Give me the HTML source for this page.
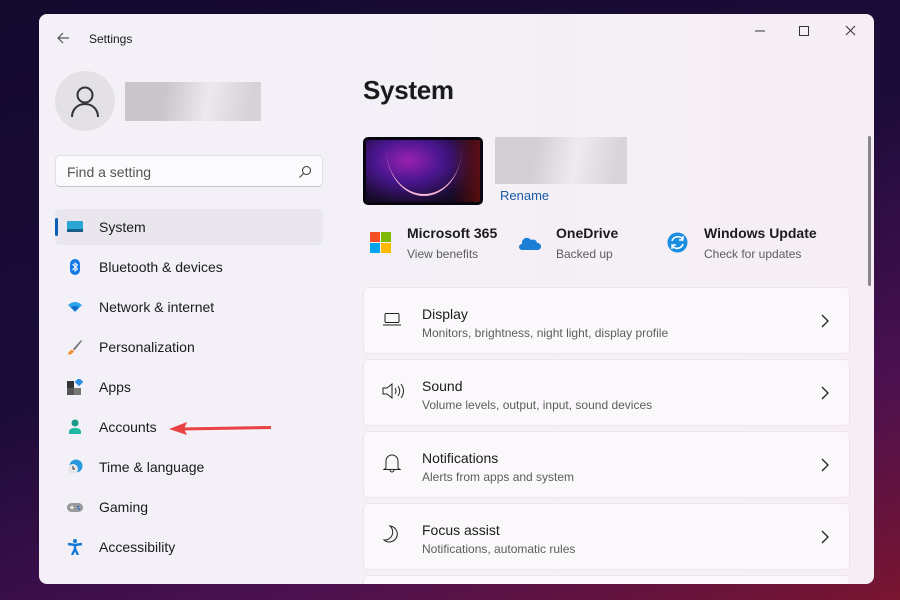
<!DOCTYPE html>
<html><head><meta charset="utf-8"><style>
*{margin:0;padding:0;box-sizing:border-box}
body{width:900px;height:600px;overflow:hidden;position:relative;font-family:"Liberation Sans",sans-serif;color:#1b1b1b;
background:linear-gradient(160deg,#140a2e 0%,#1c0c3a 45%,#4a1050 75%,#7a1530 100%)}
.win{position:absolute;left:39px;top:14px;width:835px;height:570px;border-radius:8px;overflow:hidden;
background:linear-gradient(90deg,#f3f0f7 0%,#f3f0f7 40%,#f7eef5 100%)}
.abs{position:absolute}
.nav{position:absolute;left:16px;width:268px;height:36px;border-radius:5px;font-size:14px;line-height:36px;padding-left:44px}
.nav svg{position:absolute;left:12px;top:10px}
.card{position:absolute;left:324px;width:487px;height:67px;background:#fbf8fb;border:1px solid #ebe5ec;border-radius:5px}
.card .h{position:absolute;left:58px;top:18px;font-size:14px}
.card .s{position:absolute;left:58px;top:38px;font-size:12px;color:#5d5d5d}
.card .ic{position:absolute;left:18px;top:23px}
.card .ch{position:absolute;right:20px;top:26px}
.q .b{position:absolute;font-size:14px;font-weight:bold;top:0}
.q .s{position:absolute;font-size:12px;color:#5d5d5d;top:22px}
</style></head><body>
<div class="win">
 <svg class="abs" style="left:16px;top:16px" width="16" height="16"><path d="M14 8H3M8 3L3 8l5 5" stroke="#555" stroke-width="1.2" fill="none"/></svg>
 <div class="abs" style="left:50px;top:18px;font-size:12px">Settings</div>
 <svg class="abs" style="left:715px;top:10px" width="110" height="14"><path d="M1 7h10" stroke="#333"/><rect x="45.5" y="2.5" width="9" height="9" stroke="#333" fill="none"/><path d="M92 2l9 9M101 2l-9 9" stroke="#333"/></svg>
 <div class="abs" style="left:16px;top:57px;width:60px;height:60px;border-radius:50%;background:#e3e1e5"></div>
 <svg class="abs" style="left:30px;top:70px" width="32" height="34"><circle cx="16" cy="11" r="7.5" stroke="#333" stroke-width="2" fill="none"/><path d="M3 33c0-8 6-13 13-13s13 5 13 13" stroke="#333" stroke-width="2" fill="none"/></svg>
 <div class="abs" style="left:86px;top:68px;width:136px;height:39px;background:linear-gradient(100deg,#cac6cc 30%,#ece9ee 60%,#d6d3d8 90%)"></div>
 <div class="abs" style="left:16px;top:141px;width:268px;height:32px;background:#fbfafc;border:1px solid #e1dee3;border-bottom-color:#c9c6cb;border-radius:5px;font-size:14px;color:#555;padding:8px 0 0 11px">Find a setting
  <svg class="abs" style="right:10px;top:9px" width="14" height="14"><circle cx="8.5" cy="5.5" r="4" stroke="#333" fill="none"/><path d="M5.5 8.5L1.5 12.5" stroke="#333"/></svg></div>

 <div class="nav" style="top:195px;background:#e9e6ee"><div class="abs" style="left:0;top:9px;width:3px;height:18px;border-radius:2px;background:#0a5fb8"></div><svg width="16" height="16"><rect x="0" y="2" width="16" height="11" rx="1" fill="#28a7d6"/><rect x="0" y="10" width="16" height="3" fill="#155e88"/></svg>System</div>
 <div class="nav" style="top:235px"><svg width="16" height="16"><rect x="3" y="0" width="10" height="16" rx="5" fill="#1479e6"/><path d="M5.5 5l5 5-2.5 2V4l2.5 2-5 5" stroke="#fff" fill="none"/></svg>Bluetooth &amp; devices</div>
 <div class="nav" style="top:275px"><svg width="16" height="16"><path d="M1 6q7-6 14 0L8 13z" fill="#2aa4ea"/><path d="M4 8.5q4-3 8 0L8 12z" fill="#1468c8"/></svg>Network &amp; internet</div>
 <div class="nav" style="top:315px"><svg width="16" height="16"><path d="M14 1L6 10l1.5 1.5L15 2z" fill="#777"/><path d="M5 10.5l2 2-3 3H1q0-3 4-5z" fill="#f39030"/></svg>Personalization</div>
 <div class="nav" style="top:355px"><svg width="16" height="16"><rect x="0" y="2" width="7" height="7" fill="#333"/><rect x="0" y="9" width="7" height="7" fill="#555"/><rect x="7" y="9" width="7" height="7" fill="#777"/><rect x="9" y="0" width="6" height="6" fill="#2a8fe0" transform="rotate(45 12 3)"/></svg>Apps</div>
 <div class="nav" style="top:395px"><svg width="16" height="16"><circle cx="8" cy="4" r="3.5" fill="#1a9a88"/><path d="M2 15v-2q0-4 6-4t6 4v2z" fill="#1fb8a0"/></svg>Accounts</div>
 <div class="nav" style="top:435px"><svg width="16" height="16"><circle cx="9" cy="7" r="6.5" fill="#2a9ae0"/><circle cx="6" cy="10" r="5" fill="#e6e6e6"/><path d="M6 7v3h2" stroke="#333" fill="none"/></svg>Time &amp; language</div>
 <div class="nav" style="top:475px"><svg width="16" height="16"><rect x="0" y="4" width="16" height="9" rx="4.5" fill="#999"/><path d="M3 8.5h4M5 6.5v4" stroke="#fff"/><circle cx="11" cy="7.5" r="1" fill="#2a70d0"/><circle cx="12" cy="10" r="1" fill="#2a70d0"/></svg>Gaming</div>
 <div class="nav" style="top:515px"><svg width="16" height="16"><circle cx="8" cy="2" r="2" fill="#1478d4"/><path d="M1 5l7 1 7-1M8 6v4l-3 6M8 10l3 6" stroke="#1478d4" stroke-width="2.4" fill="none"/></svg>Accessibility</div>
 <svg class="abs" style="left:128px;top:405px" width="106" height="18"><path d="M104 8.5L14 10" stroke="#e84242" stroke-width="3"/><path d="M2 10L20 3l-3 7 3 6z" fill="#e84242"/></svg>

 <div class="abs" style="left:324px;top:61px;font-size:26px;font-weight:bold;letter-spacing:-0.3px">System</div>
 <div class="abs" style="left:324px;top:123px;width:120px;height:68px;border-radius:5px;background:#070610;overflow:hidden;border:3px solid #070610">
  <div style="position:absolute;left:-10px;top:-20px;width:130px;height:90px;background:radial-gradient(ellipse at 40% 45%,#9a22b0 0%,#4a1690 30%,#1a0c30 60%,transparent 80%)"></div>
  <div style="position:absolute;left:20px;top:-40px;width:76px;height:96px;border-radius:50%;border-bottom:2px solid #f6b4d4"></div>
  <div style="position:absolute;left:85px;top:0;width:35px;height:68px;background:linear-gradient(90deg,transparent,#6a1010)"></div></div>
 <div class="abs" style="left:456px;top:123px;width:132px;height:47px;background:linear-gradient(100deg,#d2ced4 30%,#eeebef 60%,#d8d4da 90%)"></div>
 <div class="abs" style="left:461px;top:174px;font-size:13px;color:#1a5aa6">Rename</div>

 <div class="q abs" style="left:331px;top:211px;width:480px;height:40px">
  <svg class="abs" style="left:0;top:7px" width="21" height="21"><rect width="10" height="10" fill="#f25022"/><rect x="11" width="10" height="10" fill="#7fba00"/><rect y="11" width="10" height="10" fill="#00a4ef"/><rect x="11" y="11" width="10" height="10" fill="#ffb900"/></svg>
  <div class="b" style="left:37px">Microsoft 365</div><div class="s" style="left:37px">View benefits</div>
  <svg class="abs" style="left:149px;top:11px" width="22" height="14"><path d="M3 14a3 3 0 0 1 0-6 5 5 0 0 1 9-4 4 4 0 0 1 6 3 3.5 3.5 0 0 1 1 7z" fill="#1c7fd6"/></svg>
  <div class="b" style="left:186px">OneDrive</div><div class="s" style="left:186px">Backed up</div>
  <svg class="abs" style="left:297px;top:7px" width="21" height="21"><circle cx="10.5" cy="10.5" r="10" fill="#1a8ee0"/><path d="M5 9a6 6 0 0 1 10.5-2M16 12a6 6 0 0 1-10.5 2" stroke="#fff" stroke-width="1.6" fill="none"/><path d="M16 4v4h-4M5 17v-4h4" stroke="#fff" stroke-width="1.4" fill="none"/></svg>
  <div class="b" style="left:334px">Windows Update</div><div class="s" style="left:334px">Check for updates</div>
 </div>

 <div class="card" style="top:273px"><svg class="ic" width="20" height="16"><rect x="3" y="2.5" width="14" height="9" rx="1" stroke="#222" fill="none"/><path d="M1 14h18" stroke="#222"/></svg><div class="h">Display</div><div class="s">Monitors, brightness, night light, display profile</div><svg class="ch" width="8" height="14"><path d="M1 1l6 6-6 6" stroke="#222" stroke-width="1.3" fill="none"/></svg></div>
 <div class="card" style="top:345px"><svg class="ic" width="22" height="16"><path d="M1 5h4l5-4v14l-5-4H1z" stroke="#222" fill="none"/><path d="M13 5q2 3 0 6M16 3q3.5 5 0 10M19 1q5 7 0 14" stroke="#222" fill="none"/></svg><div class="h">Sound</div><div class="s">Volume levels, output, input, sound devices</div><svg class="ch" width="8" height="14"><path d="M1 1l6 6-6 6" stroke="#222" stroke-width="1.3" fill="none"/></svg></div>
 <div class="card" style="top:417px"><svg class="ic" width="20" height="20" style="top:21px"><path d="M4 15V8a6 6 0 0 1 12 0v7l2 1.5H2z" stroke="#222" fill="none"/><path d="M8 17a2 2 0 0 0 4 0" stroke="#222" fill="none"/></svg><div class="h">Notifications</div><div class="s">Alerts from apps and system</div><svg class="ch" width="8" height="14"><path d="M1 1l6 6-6 6" stroke="#222" stroke-width="1.3" fill="none"/></svg></div>
 <div class="card" style="top:489px"><svg class="ic" width="20" height="20" style="top:21px"><path d="M8 1a8 8 0 1 1-6 14 8 8 0 0 0 6-14z" stroke="#222" fill="none"/></svg><div class="h">Focus assist</div><div class="s">Notifications, automatic rules</div><svg class="ch" width="8" height="14"><path d="M1 1l6 6-6 6" stroke="#222" stroke-width="1.3" fill="none"/></svg></div>
 <div class="card" style="top:561px;height:9px;border-bottom:none;border-radius:5px 5px 0 0"></div>
 <div class="abs" style="left:829px;top:122px;width:3px;height:150px;border-radius:2px;background:#8a878c"></div>
</div>
</body></html>
